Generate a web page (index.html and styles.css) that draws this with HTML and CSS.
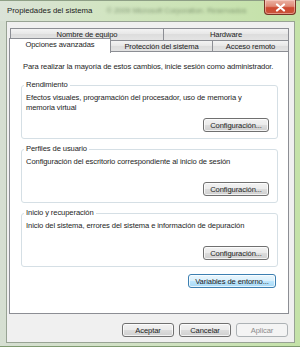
FILE: index.html
```html
<!DOCTYPE html>
<html lang="es">
<head>
  <meta charset="UTF-8">
  <title>Propiedades del sistema</title>
  <link rel="stylesheet" href="styles.css">
</head>
<body>
  <div class="window">
    <!-- Barra de titulo -->
    <div class="titlebar">
      <span class="title">Propiedades del sistema</span>
      <span class="behind">© 2009 Microsoft Corporation. Reservados</span>
      <button class="close" aria-label="Cerrar">
        <svg width="11" height="9" viewBox="0 0 11 9">
          <path d="M2 1.5 L9 7.5 M9 1.5 L2 7.5" stroke="#fff" stroke-width="2.2" stroke-linecap="round"/>
        </svg>
      </button>
    </div>

    <div class="dialog">
      <!-- Pestanas -->
      <div class="tabs">
        <div class="tab-row back">
          <div class="tab t-equipo">Nombre de equipo</div>
          <div class="tab t-hardware">Hardware</div>
        </div>
        <div class="tab-row front">
          <div class="tab t-avanzadas selected">Opciones avanzadas</div>
          <div class="tab t-proteccion">Protección del sistema</div>
          <div class="tab t-remoto">Acceso remoto</div>
        </div>
      </div>

      <div class="panel">
        <p class="intro">Para realizar la mayoría de estos cambios, inicie sesión como administrador.</p>

        <fieldset class="group">
          <legend>Rendimiento</legend>
          <div class="group-text">Efectos visuales, programación del procesador, uso de memoria y memoria virtual</div>
          <div class="group-actions"><button class="btn btn-config">Configuración...</button></div>
        </fieldset>

        <fieldset class="group">
          <legend>Perfiles de usuario</legend>
          <div class="group-text">Configuración del escritorio correspondiente al inicio de sesión</div>
          <div class="group-actions"><button class="btn btn-config">Configuración...</button></div>
        </fieldset>

        <fieldset class="group">
          <legend>Inicio y recuperación</legend>
          <div class="group-text">Inicio del sistema, errores del sistema e información de depuración</div>
          <div class="group-actions"><button class="btn btn-config">Configuración...</button></div>
        </fieldset>

        <div class="env-row">
          <button class="btn btn-env">Variables de entorno...</button>
        </div>
      </div>

      <!-- Botones inferiores -->
      <div class="footer">
        <button class="btn btn-foot">Aceptar</button>
        <button class="btn btn-foot">Cancelar</button>
        <button class="btn btn-foot" disabled>Aplicar</button>
      </div>
    </div>
  </div>
</body>
</html>
```

FILE: styles.css
```css
/* Reset di base */
* {
  box-sizing: border-box;
}
body {
  margin: 0;
  width: 300px;
  height: 347px;
  overflow: hidden;
  font-family: "Liberation Sans", Arial, sans-serif;
  font-size: 7.6px;
  letter-spacing: -0.1px;
  color: #1c1c1c;
}

/* Marco della finestra */
.window {
  height: 347px;
  display: flex;
  flex-direction: column;
  background: linear-gradient(to right, #d6dfd2 0%, #cfe2bf 60%, #c4e2a8 100%);
  border-bottom: 1px solid #7f9a70;
}
.titlebar {
  height: 21px;
  flex: none;
  display: flex;
  align-items: flex-start;
  background: linear-gradient(to right, #dbe3d8 0%, #d2e5c2 35%, #c3e1a6 100%);
  border-top: 1px solid #8e9f86;
}
.title {
  font-size: 7.8px;
  letter-spacing: 0;
  line-height: 10px;
  padding: 5px 0 0 7px;
  color: #1a1a1a;
  white-space: nowrap;
}
.behind {
  flex: none;
  margin-right: auto;
  white-space: nowrap;
  line-height: 10px;
  padding: 5px 0 0 14px;
  font-size: 7.6px;
  color: rgba(70, 90, 60, 0.55);
  filter: blur(1.4px);
}
.close {
  flex: none;
  width: 32px;
  height: 15px;
  margin: -1px 4px 0 0;
  padding: 0;
  border: 1px solid #7a3426;
  border-top: none;
  border-radius: 0 0 4px 4px;
  background: linear-gradient(#eab2a4 0%, #e08a76 45%, #cd4a31 55%, #c9533a 100%);
  box-shadow: inset 0 0 0 1px rgba(255, 220, 210, 0.5);
  display: flex;
  align-items: center;
  justify-content: center;
}

/* Area del dialogo */
.dialog {
  flex: 1;
  margin: 0 5px 3px 6px;
  background: #f0f0f0;
  border: 1px solid #98a394;
  display: flex;
  flex-direction: column;
}

/* Pestanas */
.tabs {
  padding-top: 6px;
}
.tab-row {
  display: flex;
  height: 12px;
}
.tab-row.back {
  margin-left: 3px;
}
.tab-row.front {
  margin-left: 2px;
}
.tab {
  height: 12px;
  line-height: 11px;
  text-align: center;
  white-space: nowrap;
  border: 1px solid #8c8e94;
  border-bottom: none;
  background: linear-gradient(#f3f3f3, #e6e6e6 50%, #dddddd 50%, #e4e4e4);
}
.tab + .tab {
  margin-left: -1px;
}
.t-equipo { width: 154px; }
.t-hardware { width: 126px; }
.t-avanzadas { width: 102px; }
.t-proteccion { width: 103px; }
.t-remoto { width: 77px; }
.tab.selected {
  height: 15px;
  margin-top: -2px;
  line-height: 11px;
  background: #fff;
  position: relative;
  z-index: 1;
}

.panel {
  width: 280px;
  height: 263px;
  margin-left: 2px;
  margin-top: -1px;
  background: #fff;
  border: 1px solid #8c8e94;
  padding: 10px 10px 0 11px;
}
.intro {
  margin: 0 0 8px 2px;
  line-height: 10px;
  white-space: nowrap;
}

/* Riquadri */
.group {
  margin: 0 0 5px 0;
  padding: 3px 8px 6px 4px;
  border: 1px solid #d5dfe5;
  border-radius: 3px;
  min-width: 0;
}
.group legend {
  padding: 0 2px;
  margin-left: -2px;
  line-height: 10px;
}
.group-text {
  height: 20px;
  line-height: 10px;
}
.group-actions {
  display: flex;
  justify-content: flex-end;
  margin-top: 5px;
}

/* Pulsanti */
.btn {
  height: 14px;
  padding: 0;
  font-family: inherit;
  font-size: 7.6px;
  letter-spacing: -0.1px;
  color: #1c1c1c;
  border: 1px solid #707070;
  border-radius: 3px;
  background: linear-gradient(#f2f2f2 0%, #ebebeb 50%, #dddddd 50%, #cfcfcf 100%);
  box-shadow: inset 0 0 0 1px rgba(255, 255, 255, 0.75);
}
.btn-config {
  width: 66px;
}
.env-row {
  display: flex;
  justify-content: flex-end;
  margin: 7px 2px 0 0;
}
.btn-env {
  width: 88px;
  border-color: #3c7fb1;
  background: linear-gradient(#eaf6fd 0%, #d9f0fc 50%, #bee6fd 50%, #a7d9f5 100%);
}
.footer {
  display: flex;
  justify-content: flex-end;
  gap: 5px;
  padding: 9px 6px 0 0;
}
.btn-foot {
  width: 52px;
}
.btn:disabled {
  color: #8d8d8d;
  border-color: #adb2b5;
  background: #f4f4f4;
  box-shadow: none;
}
```
